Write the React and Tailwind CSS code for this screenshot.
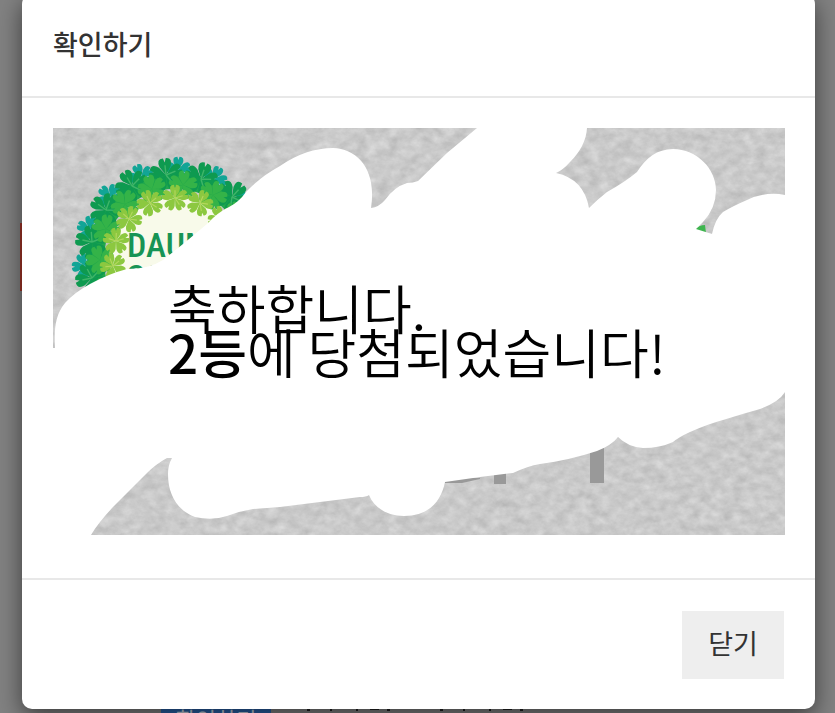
const SCRATCHED_AREA =
  'M477 128 L587 128 Q586 146 570 162 Q563 170 556 173 Q584 179 589 208 Q598 199 607 192 Q625 182 637 172 ' +
  'C646 158 657 149 673 149 C697 149 716 169 716 190 Q716 208 703 222 L696 229 L712 234 Q715 219 723 212 ' +
  'Q733 206 747 200 Q766 191 785 195 L785 392 Q779 402 760 409 Q742 414 723 420 Q708 424 690 432 ' +
  'Q679 437 673 442 Q660 448 643 448 Q628 447 618 437 Q612 445 597 451 Q570 460 540 464 Q528 466 513 473 ' +
  'L480 477 L445 482 C441 503 427 516 404 516 C388 516 374 508 369 495 Q366 497 360 497 L280 507 ' +
  'L253 509 Q240 511 227 516 Q212 521 195 517 C176 510 168 493 168 474 Q168 465 172 458 L167 458 ' +
  'Q156 464 147 473 L113 507 Q98 523 91 535 L53 535 L53 348 L55 348 C54 330 55 315 65 303 ' +
  'Q75 292 90 284 Q108 274 127 269 Q149 269 163 260 L183 244 L207 224 Q218 212 229 207 ' +
  'Q239 202 246 192 Q260 177 280 166 Q306 148 333 148 C358 149 377 170 371 208 ' +
  'Q379 207 385 200 Q394 187 407 183 Q413 183 418 181 L447 153 Z';

function ring(count, radius, offset = 0) {
  return Array.from({ length: count }, (_, i) => {
    const angle = ((i * 360) / count + offset) * (Math.PI / 180);
    return {
      x: Math.round(175 + radius * Math.cos(angle)),
      y: Math.round(260 + radius * Math.sin(angle)),
      turn: (i * 360) / count + offset,
    };
  });
}

function Clover({ x, y, turn, size, color, vein }) {
  return (
    <g transform={`translate(${x} ${y}) rotate(${turn}) scale(${size})`} fill={color}>
      {[0, 72, 144, 216, 288].map((a) => (
        <path key={a} transform={`rotate(${a})`} d="M0 0 L6 -4 Q12 -6 12 -1 L9 0 L12 1 Q12 6 6 4 Z" />
      ))}
      {vein && <path d="M0 0 L7 0 M0 0 L2 7 M0 0 L-6 4" stroke={vein} strokeWidth="1" fill="none" />}
    </g>
  );
}

function ScratchCard() {
  return (
    <svg viewBox="53 128 732 407" className="block w-full" role="img" aria-label="DAUM">
      <defs>
        <filter id="grain" x="0" y="0" width="100%" height="100%" colorInterpolationFilters="sRGB">
          <feTurbulence type="fractalNoise" baseFrequency="0.09 0.12" numOctaves="4" seed="21" />
          <feColorMatrix
            values="0.12 0.1 0 0 0.68
                    0.12 0.1 0 0 0.68
                    0.12 0.1 0 0 0.68
                    0 0 0 0 1"
          />
        </filter>
      </defs>
      <rect x="53" y="128" width="732" height="407" filter="url(#grain)" />

      {/* wreath logo */}
      <circle cx="175" cy="260" r="64" fill="#f8faea" />
      {ring(15, 90, 8).map((p, i) => (
        <Clover key={i} {...p} size={1.1} color="#12a596" />
      ))}
      <circle cx="175" cy="260" r="79" fill="none" stroke="#21a74c" strokeWidth="16" />
      {ring(15, 85).map((p, i) => (
        <Clover key={i} {...p} size={1.4} color="#0e9a50" vein="#3fb568" />
      ))}
      {ring(15, 75, 12).map((p, i) => (
        <Clover key={i} {...p} size={1.2} color="#34b348" />
      ))}
      {ring(15, 62, 6).map((p, i) => (
        <Clover key={i} {...p} size={1.1} color="#8cc840" vein="#b4d85e" />
      ))}
      <g
        fill="#179455"
        fontFamily="'Roboto Condensed', 'Open Sans Condensed', 'Liberation Sans Narrow', Roboto, sans-serif"
        fontWeight="500"
      >
        <text x="127" y="257" fontSize="34">DAUM</text>
        <text x="126" y="289" fontSize="34">CS</text>
      </g>

      {/* leftovers of the printed lettering */}
      <path d="M445 478 H480 V479 L462 483 H445 Z M494 470 H506 V484 H494 Z M590 445 H604 V483 H590 Z" fill="#999" />
      <path d="M694 230 Q699 225 705 225 L706 233 Z" fill="#3fb54f" />

      <path d={SCRATCHED_AREA} fill="#fff" />
    </svg>
  );
}

function PageBehind() {
  return (
    <div className="absolute inset-0 flex flex-col justify-between overflow-hidden bg-[#828282]" aria-hidden="true">
      <div className="ml-5 mt-[223px] h-[68px] w-4 bg-[#a03428]" />
      <div className="flex h-1 items-start pl-[161px]">
        <div className="h-full w-[110px] overflow-hidden bg-[#2a62a8] text-center text-[22px] leading-[18px] text-[#c9d3df]">
          확인하기
        </div>
        <svg className="ml-6 h-1 w-60" viewBox="0 0 240 4" fill="#222">
          <path d="M12 0h3v2h-3z M35 0h2v2h-2z M61 0h2v2h-2z M75 0h9v1h-9z M92 0h3v2h-3z M145 0h3v2h-3z M168 0h2v2h-2z M194 0h2v2h-2z M208 0h9v1h-9z M225 0h3v2h-3z" />
        </svg>
      </div>
    </div>
  );
}

export default function App() {
  return (
    <div className="relative min-h-screen overflow-hidden font-['Noto_Sans_CJK_KR',sans-serif] text-[#333]">
      <PageBehind />
      <div className="relative pb-1 pl-[22px] pr-5">
        <section
          role="dialog"
          aria-labelledby="dialog-title"
          className="-mt-1.5 rounded-[10px] bg-white shadow-[0_8px_24px_rgba(0,0,0,0.55)]"
        >
          <header className="border-b-2 border-[#e8e8e8] px-[31px] pb-8 pt-[30px]">
            <h1 id="dialog-title" className="text-[27px] font-medium leading-10">확인하기</h1>
          </header>
          <div className="relative pb-[43px] pl-[31px] pr-[30px] pt-[30px]">
            <ScratchCard />
            <p className="absolute left-[146px] top-[187px] whitespace-nowrap text-[53px] font-[350] leading-[44px] text-black">
              축하합니다.
              <br />
              <strong className="font-medium">2등</strong>에 당첨되었습니다!
            </p>
          </div>
          <footer className="flex justify-end border-t-2 border-[#e8e8e8] pb-[30px] pr-[31px] pt-[31px]">
            <button type="button" className="h-[68px] w-[102px] bg-[#eee] pb-1 text-[27px]">
              닫기
            </button>
          </footer>
        </section>
      </div>
    </div>
  );
}
